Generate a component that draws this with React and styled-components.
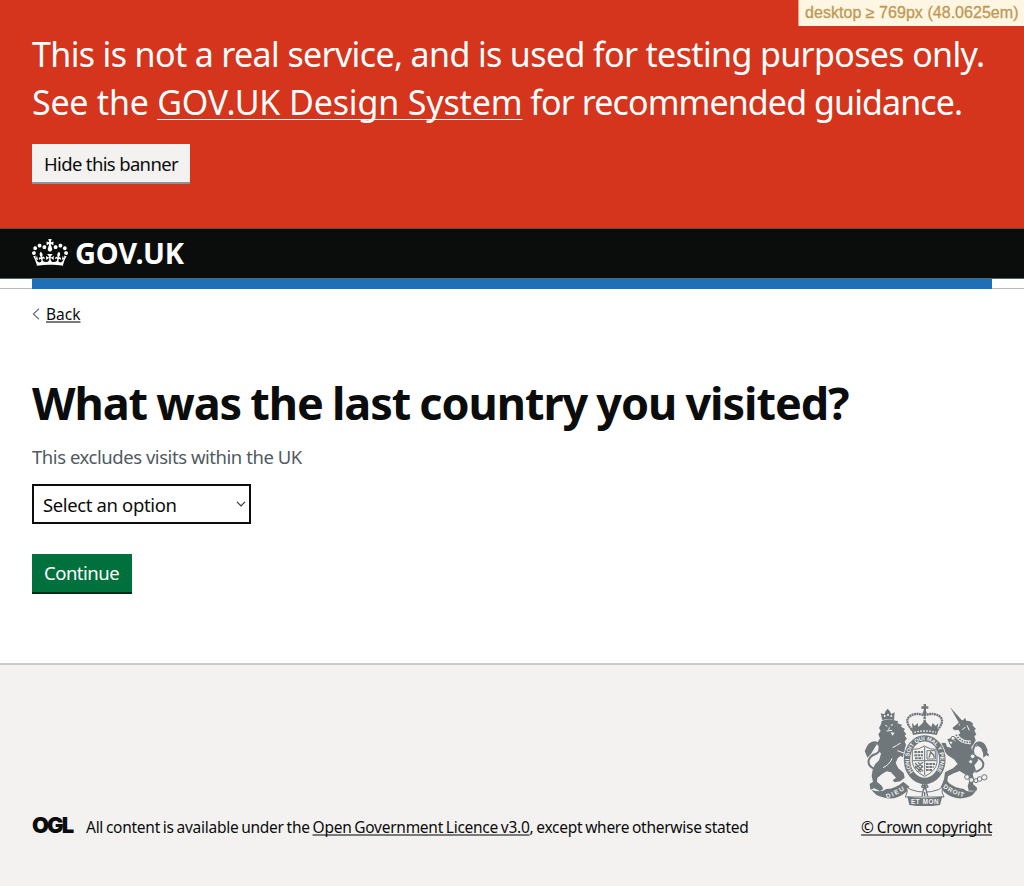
import React from "react";
import styled, { createGlobalStyle } from "styled-components";

const GlobalStyle = createGlobalStyle`
  * { box-sizing: border-box; }
  body { margin: 0; background: #fff; color: #0b0c0c; font-family: "Noto Sans", "Open Sans", sans-serif; }
`;

const Page = styled.div`
  display: flex;
  flex-direction: column;
  min-height: 886px;
  position: relative;
`;

const Breakpoint = styled.div`
  position: absolute;
  top: 0;
  right: 0;
  width: 226px;
  height: 26px;
  padding-left: 6px;
  border-left: 1px solid #ef9b82;
  background: #fdf6e3;
  color: #c09853;
  font: 16px/26px "Liberation Sans", Arial, sans-serif;
  letter-spacing: 0.04px;
  white-space: nowrap;
  -webkit-text-stroke: 0.3px #c09853;
`;

const Banner = styled.section`
  height: 228px;
  padding: 30px 32px 0;
  background: #d4351c;
  color: #fff;
`;

const BannerText = styled.p`
  margin: 0 0 18px;
  font-size: 34px;
  line-height: 48px;
  white-space: nowrap;
`;

const Line = styled.span`
  display: block;
  width: max-content;
  letter-spacing: ${(p) => p.$tracking || "0"};
  word-spacing: ${(p) => p.$words || "0"};
`;

const Run = styled.span`
  letter-spacing: ${(p) => p.$tracking};
`;

const Link = styled.a`
  color: inherit;
  letter-spacing: ${(p) => p.$tracking || "inherit"};
  text-decoration: underline;
  text-decoration-thickness: ${(p) => p.$weight || "2px"};
  text-decoration-color: ${(p) => p.$line || "#797a7a"};
  text-decoration-skip-ink: none;
  text-underline-offset: ${(p) => p.$offset || "1px"};
`;

const Button = styled.button`
  display: block;
  height: 38px;
  width: ${(p) => p.$width};
  margin: 0;
  padding: ${(p) => (p.$secondary ? "1px" : "0")} 0 0 12px;
  border: 0;
  text-align: left;
  background: ${(p) => (p.$secondary ? "#f3f2f1" : "#00703c")};
  color: ${(p) => (p.$secondary ? "#0b0c0c" : "#fff")};
  box-shadow: 0 2px 0 ${(p) => (p.$secondary ? "#929191" : "#002d18")};
  font: 18.5px/38px "Noto Sans", sans-serif;
  letter-spacing: ${(p) => (p.$secondary ? "-0.65px" : "-0.5px")};
  white-space: nowrap;
`;

const Header = styled.header`
  height: 51px;
  padding: 10px 32px 0;
  display: flex;
  gap: 7px;
  border-top: 1px solid #5f4a40;
  border-bottom: 1px solid #57646c;
  background: #0b0c0c;
  color: #fff;
`;

const Wordmark = styled.span`
  font-size: 29px;
  line-height: 28px;
  font-weight: 700;
  letter-spacing: -0.15px;
`;

const ServiceBar = styled.div`
  height: 10px;
  padding: 0 32px;
  border-bottom: 1px solid #b9bcbd;
`;

const ServiceStripe = styled.div`
  height: 10px;
  background: #1d70b8;
`;

const Main = styled.main`
  flex: 1;
  padding: 13px 32px 0;
`;

const BackRow = styled.nav`
  display: flex;
  align-items: center;
  gap: 6px;
  height: 24px;
  font-size: 15.5px;
  line-height: 24px;
`;

const Heading = styled.h1`
  margin: 49px 0 0;
  font-size: 45px;
  line-height: 56px;
  font-weight: 700;
  white-space: nowrap;
`;

const Hint = styled.p`
  margin: 12px 0 13px;
  color: #505a5f;
  font-size: 18.5px;
  line-height: 28px;
`;

const Select = styled.div`
  display: flex;
  align-items: center;
  justify-content: space-between;
  width: 219px;
  height: 40px;
  margin-bottom: 30px;
  padding: 0 3px 0 9px;
  border: 2px solid #0b0c0c;
  font-size: 18.5px;
`;

const Footer = styled.footer`
  display: flex;
  justify-content: space-between;
  align-items: flex-end;
  height: 223px;
  padding: 0 32px 47px;
  border-top: 2px solid #c8cacb;
  background: #f3f2f1;
  font-size: 15.5px;
  line-height: 24px;
  white-space: nowrap;
`;

const Licence = styled.div`
  display: flex;
  gap: 13px;
`;

const OglMark = styled.span`
  width: 41px;
  font: 900 22px/20px Inter, sans-serif;
  letter-spacing: -2px;
`;

const Copyright = styled.div`
  display: flex;
  flex-direction: column;
  align-items: flex-end;
  gap: 9px;
`;

const ArmsBox = styled.div`
  padding-right: 3px;
  height: 102px;
  color: #6f777b;
`;

const Crown = () => (
  <svg width="36" height="27" viewBox="0 0 132 97" fill="currentColor" preserveAspectRatio="none">
    <path d="M25 30.2c3.5 1.5 7.7-.2 9.1-3.7 1.5-3.6-.2-7.8-3.9-9.2-3.6-1.4-7.6.3-9.1 3.9-1.4 3.5.3 7.5 3.9 9zM9 39.5c3.6 1.5 7.8-.2 9.2-3.7 1.5-3.6-.2-7.8-3.9-9.1-3.6-1.5-7.6.2-9.1 3.8-1.4 3.5.3 7.5 3.8 9zM4.4 57.2c3.5 1.5 7.7-.2 9.1-3.8 1.5-3.6-.2-7.7-3.9-9.1-3.5-1.5-7.6.3-9.1 3.8-1.4 3.5.3 7.6 3.9 9.1zm38.3-21.4c3.5 1.5 7.7-.2 9.1-3.8 1.5-3.6-.2-7.7-3.9-9.1-3.6-1.5-7.6.3-9.1 3.8-1.3 3.6.4 7.7 3.9 9.1zm64.4-5.6c-3.6 1.5-7.8-.2-9.1-3.7-1.5-3.6.2-7.8 3.8-9.2 3.6-1.4 7.7.3 9.2 3.9 1.3 3.5-.4 7.5-3.9 9zm15.9 9.3c-3.6 1.5-7.7-.2-9.1-3.7-1.5-3.6.2-7.8 3.7-9.1 3.6-1.5 7.7.2 9.2 3.8 1.5 3.5-.3 7.5-3.8 9zm4.7 17.7c-3.6 1.5-7.8-.2-9.2-3.8-1.5-3.6.2-7.7 3.9-9.1 3.6-1.5 7.7.3 9.2 3.8 1.3 3.5-.4 7.6-3.9 9.1zM89.3 35.8c-3.6 1.5-7.8-.2-9.2-3.8-1.4-3.6.2-7.7 3.9-9.1 3.6-1.5 7.7.3 9.2 3.8 1.4 3.6-.3 7.7-3.9 9.1zM69.7 17.7l8.9 4.7V9.3l-8.9 2.8c-.2-.3-.5-.6-.9-.9L72.4 0H59.6l3.5 11.2c-.3.3-.6.5-.9.9l-8.8-2.8v13.1l8.8-4.7c.3.3.6.7.9.9l-5 15.4v.1c-.2.8-.4 1.6-.4 2.4 0 4.1 3.1 7.5 7 8.1h.2c.3 0 .7.1 1 .1.4 0 .7 0 1-.1h.2c4-.6 7.1-4.1 7.1-8.1 0-.8-.1-1.7-.4-2.4V34l-5.1-15.4c.4-.2.7-.6 1-.9zM66 92.8c16.9 0 32.8 1.1 47.1 3.2 4-16.9 8.9-26.7 14-33.5l-9.6-3.4c1 4.9 1.1 7.2 0 10.2-1.5-1.4-3-4.3-4.2-8.7L108.6 76c2.8-2 5-3.2 7.5-3.3-4.4 9.4-10 11.9-13.6 11.2-4.3-.8-6.3-4.6-5.6-7.9 1-4.7 5.7-5.9 8-.5 4.3-8.7-3-11.4-7.6-8.8 7.1-7.2 7.9-13.5 2.1-21.1-8 6.1-8.1 12.3-4.5 20.8-4.7-5.4-12.1-2.5-9.5 6.2 3.4-5.2 7.9-2 7.2 3.1-.6 4.3-6.4 7.8-13.5 7.2-10.3-.9-10.9-8-11.2-13.8 2.5-.5 7.1 1.8 11 7.3L80.2 60c-4.1 4.4-8 5.3-12.3 5.4 1.4-4.4 8-11.6 8-11.6H55.5s6.4 7.2 7.9 11.6c-4.2-.1-8-1-12.3-5.4l1.4 16.4c3.9-5.5 8.5-7.7 10.9-7.3-.3 5.8-.9 12.8-11.1 13.8-7.2.6-12.9-2.9-13.5-7.2-.7-5 3.8-8.3 7.1-3.1 2.7-8.7-4.6-11.6-9.4-6.2 3.7-8.5 3.6-14.7-4.6-20.8-5.8 7.6-5 13.9 2.2 21.1-4.7-2.6-11.9.1-7.7 8.8 2.3-5.5 7.1-4.2 8.1.5.7 3.3-1.3 7.1-5.7 7.9-3.5.7-9-1.8-13.5-11.2 2.5.1 4.7 1.3 7.5 3.3l-4.7-15.4c-1.2 4.4-2.7 7.2-4.3 8.7-1.1-3-.9-5.3 0-10.2l-9.5 3.4c5 6.9 9.9 16.7 14 33.5 14.8-2.1 30.8-3.2 47.7-3.2z" />
  </svg>
);

const paper = "#f3f2f1";

const Arms = () => (
  <svg width="125" height="102" viewBox="27 27 375 306" fill="currentColor" stroke="none">
    <defs>
      <path id="garter" d="M170 234A53 62 0 1 1 248 234" />
      <path id="dieu" d="M92 302Q122 293 150 273" />
      <path id="droit" d="M268 270Q298 291 334 300" />
    </defs>
    {/* lion with its crown and tail */}
    <path d="M82 76L77 55L88 58L92 48L98 41L104 48L109 57L119 52L117 76Q100 68 82 76Z" />
    <g fill={paper}><circle cx="89" cy="63" r="3" /><circle cx="99" cy="60" r="3" /><circle cx="109" cy="63" r="3" /></g>
    <path d="M80 78Q98 69 117 76L130 79L127 85L141 89L138 95L150 102L146 108L154 117L149 122L156 131L149 139L153 150L149 163L160 182L152 190L136 183L128 190L122 204L130 220L146 234L149 248L136 259L119 262L113 256L123 248L108 232L95 229L80 238L67 249L66 260L80 272L85 282L75 289L58 280L46 284L44 267L54 260L50 243L53 224L60 208L72 196L78 176L70 163L74 150L68 142L75 130L70 118L77 108L72 99L78 88Z" />
    <path d="M60 222Q38 214 41 196Q45 182 62 177Q78 170 73 152Q67 138 52 143Q36 149 36 168" fill="none" stroke="currentColor" strokeWidth="6" />
    <path d="M38 152L29 168L33 178L37 188Q50 177 55 165L66 147L54 141Z" />
    <path d="M111 190Q105 208 84 218M137 144Q124 152 113 158M147 174L127 167" stroke={paper} strokeWidth="3" fill="none" />
    <path d="M91 91L97 94M107 91L114 89M95 108L111 106M103 97L101 104" stroke={paper} strokeWidth="3" />
    <path d="M107 112L112 122L119 113Z" fill={paper} />
    {/* unicorn with its horn, collar, chain and tail */}
    <path d="M285 36L322 77L312 84Z" />
    <path d="M310 84L319 76L325 75L330 68L334 77L346 79L355 87L352 91L363 102L358 106L364 119L358 123L362 136L356 147L349 156L352 172L368 186L369 197L358 211L363 226L353 237L357 253L354 267L366 278L365 287L341 287L338 272L345 253L333 240L314 228L296 235L279 244L277 257L284 269L272 276L260 271L267 253L270 232L294 220L308 207L297 193L278 181L268 168L256 154L261 143L272 144L276 155L290 159L277 133L290 128L304 142L298 132L305 122L316 115L311 105L298 106L292 99Z" />
    <path d="M303 119Q318 144 348 142" stroke={paper} strokeWidth="11" fill="none" />
    <path d="M303 119Q318 144 348 142" stroke="currentColor" strokeWidth="5" strokeDasharray="5 3" fill="none" />
    <path d="M311 89L315 90M322 105L331 96M336 91L343 106" stroke={paper} strokeWidth="3" />
    <path d="M361 231Q390 222 384 202Q379 191 363 186Q350 176 356 158Q362 139 378 143Q393 149 393 170Q394 179 401 181" fill="none" stroke="currentColor" strokeWidth="6" />
    <path d="M372 140L389 149L398 165L394 181L385 188L384 173L378 159L369 153L360 157Z" />
    <g fill={paper} stroke="currentColor" strokeWidth="3">
      <circle cx="294" cy="130" r="6" /><circle cx="288" cy="143" r="5" /><circle cx="353" cy="184" r="7" /><circle cx="347" cy="200" r="6" />
      <circle cx="336" cy="246" r="7" /><circle cx="349" cy="255" r="7" /><circle cx="363" cy="257" r="6" /><circle cx="374" cy="252" r="7" /><circle cx="388" cy="247" r="8" />
    </g>
    {/* imperial crown */}
    <path d="M206 27H213V34H220V41H213V49H206V41H199V34H206Z" />
    <circle cx="209" cy="53" r="6" />
    <path d="M170 104Q148 78 163 65Q180 51 208 61Q238 51 255 65Q270 79 248 104Q208 92 170 104Z" fill={paper} stroke="currentColor" strokeWidth="7" strokeDasharray="6 1.5" />
    <path d="M209 58V81" stroke="currentColor" strokeWidth="7" strokeDasharray="6 2" />
    <path d="M171 83L179 93L188 84L190 96L201 86L209 75L219 87L229 96L233 84L242 93L250 84L246 107Q208 98 173 107Z" />
    <path d="M170 106Q209 95 250 106L246 120Q208 111 174 120Z" />
    <path d="M178 112Q209 104 243 112" fill="none" stroke={paper} strokeWidth="4" strokeDasharray="5 4" />
    {/* garter with the quartered shield */}
    <ellipse cx="209" cy="194" rx="65" ry="76" fill={paper} />
    <ellipse cx="209" cy="194" rx="53" ry="64" fill="none" stroke="currentColor" strokeWidth="19" />
    <text fontFamily="Liberation Sans, sans-serif" fontWeight="700" fontSize="17" fill={paper} dominantBaseline="central">
      <textPath href="#garter" textLength="268" lengthAdjust="spacing">HONI SOIT QUI MAL Y PENSE</textPath>
    </text>
    <path d="M172 163Q191 165 208 153Q226 165 246 163V202Q243 228 209 244Q176 228 172 202Z" fill={paper} stroke="currentColor" strokeWidth="3" />
    <path d="M209 156V240M174 197H244" stroke="currentColor" strokeWidth="3" />
    <path d="M178 171H204M178 181H204M180 190H203M213 207H240M213 216H236M213 225H231" stroke="currentColor" strokeWidth="6" strokeDasharray="8 2" />
    <path d="M216 167H241V192H216Z" fill="none" stroke="currentColor" strokeWidth="3" />
    <path d="M222 188L227 171L235 179L238 188M180 204L204 229M189 202L204 218M180 213L198 231M204 202L180 220M204 212L189 229" fill="none" stroke="currentColor" strokeWidth="4" />
    {/* motto ribbon */}
    <path d="M50 284Q78 295 94 282Q123 280 145 260L163 275L155 290Q119 319 84 307Q60 302 50 284Z" />
    <path d="M364 284Q342 296 326 282Q297 279 275 259L257 274L267 291Q300 318 337 307Q357 301 364 284Z" />
    <path d="M155 276Q160 292 151 306H267Q257 292 263 276L250 284Q210 299 168 284Z" fill={paper} stroke="currentColor" strokeWidth="3" />
    <path d="M157 304Q208 316 262 304L255 330Q209 338 163 330Z" />
    <path d="M209 291V303M201 304L209 267L218 304M209 281L200 275L203 269L209 276L215 269L219 275Z" stroke="currentColor" strokeWidth="4" fill={paper} />
    <g fontFamily="Liberation Sans, sans-serif" fontWeight="700" fontSize="19" fill={paper}>
      <text dominantBaseline="central"><textPath href="#dieu" textLength="58">DIEU</textPath></text>
      <text dominantBaseline="central"><textPath href="#droit" textLength="66">DROIT</textPath></text>
      <text x="168" y="328" textLength="83">ET MON</text>
    </g>
  </svg>
);

export default function App() {
  return (
    <Page>
      <GlobalStyle />
      <Breakpoint>desktop ≥ 769px (48.0625em)</Breakpoint>
      <Banner>
        <BannerText>
          <Line $tracking="-0.64px">This is not a real service, and is used for testing purposes only.</Line>
          <Line $tracking="-0.25px">See the <Link href="#" $tracking="-0.15px" $weight="1px" $line="#fff" $offset="4px">GOV.UK Design System</Link><Run $tracking="-0.9px"> for recommended guidance.</Run></Line>
        </BannerText>
        <Button $secondary $width="158px">Hide this banner</Button>
      </Banner>
      <Header>
        <Crown />
        <Wordmark>GOV.UK</Wordmark>
      </Header>
      <ServiceBar><ServiceStripe /></ServiceBar>
      <Main>
        <BackRow>
          <svg width="8" height="12" viewBox="0 0 8 12" fill="none" stroke="#6b7175" strokeWidth="1.2"><path d="M7 .7L1.4 6L7 11.3" /></svg>
          <Link href="#">Back</Link>
        </BackRow>
        <Heading><Line $tracking="-1.05px" $words="-1.5px">What was the last country you visited?</Line></Heading>
        <Hint><Line $tracking="-0.45px">This excludes visits within the UK</Line></Hint>
        <Select>
          <Line $tracking="-0.37px">Select an option</Line>
          <svg width="10" height="6" viewBox="0 0 10 6" fill="none" stroke="#333" strokeWidth="1.2"><path d="M1 .8L5 4.8L9 .8" /></svg>
        </Select>
        <Button $width="100px">Continue</Button>
      </Main>
      <Footer>
        <Licence>
          <OglMark>OGL</OglMark>
          <Line $tracking="-0.27px" $words="-0.9px">All content is available under the <Link href="#">Open Government Licence v3.0</Link>, except where otherwise stated</Line>
        </Licence>
        <Copyright>
          <ArmsBox><Arms /></ArmsBox>
          <Line $tracking="-0.25px" $words="-0.8px"><Link href="#">© Crown copyright</Link></Line>
        </Copyright>
      </Footer>
    </Page>
  );
}
